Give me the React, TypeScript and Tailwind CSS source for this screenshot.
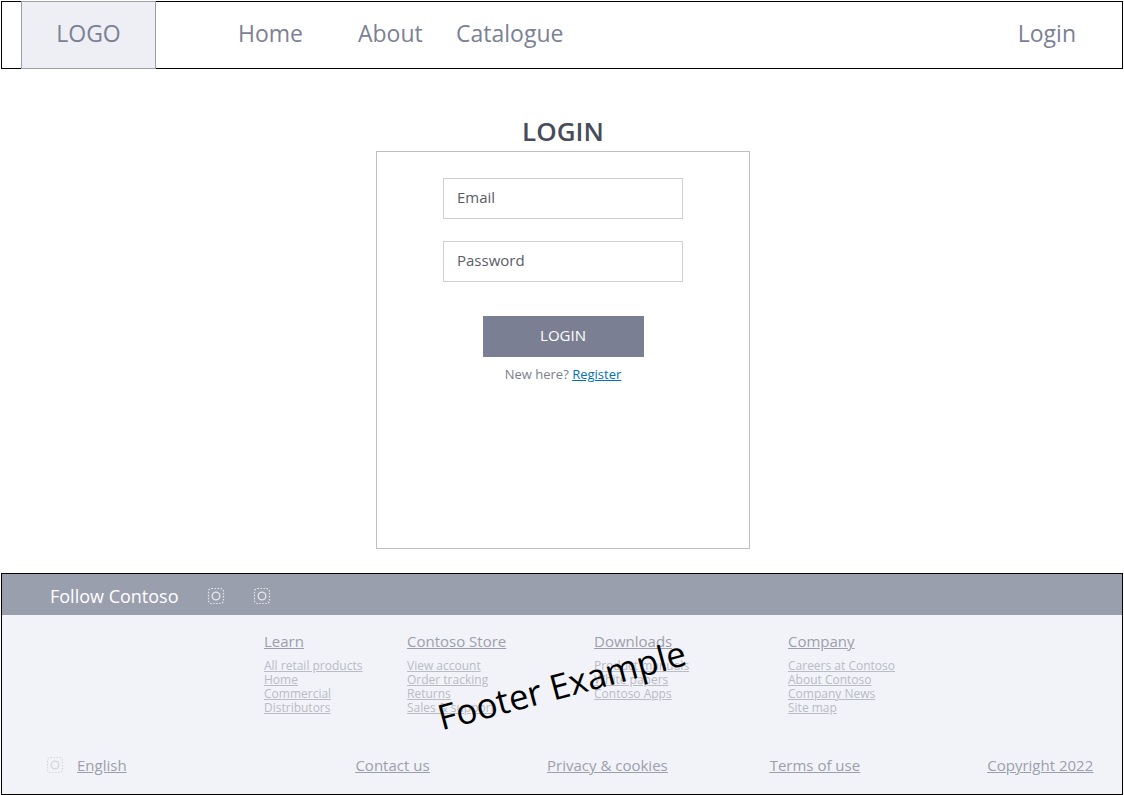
import React from "react";

const columns = [
  { title: "Learn", links: ["All retail products", "Home", "Commercial", "Distributors"] },
  { title: "Contoso Store", links: ["View account", "Order tracking", "Returns", "Sales & support"] },
  { title: "Downloads", links: ["Product manuals", "White papers", "Contoso Apps"] },
  { title: "Company", links: ["Careers at Contoso", "About Contoso", "Company News", "Site map"] },
];

function PlaceholderIcon({ className }: { className: string }) {
  return (
    <svg viewBox="0 0 18 18" className={className} fill="none" stroke="currentColor" aria-hidden="true">
      <rect x="1.5" y="1.5" width="15" height="15" rx="3" strokeWidth="1.2" strokeDasharray="1.5 1.5" />
      <circle cx="9" cy="9" r="3.8" strokeWidth="1.3" />
    </svg>
  );
}

function Header() {
  return (
    <header className="flex h-[68px] items-stretch border border-black pl-5 text-[23px] text-[#7b8194]">
      <a
        href="#"
        className="-my-px -ml-px flex w-[135px] items-center justify-center border border-[#9a9fae] bg-[#eeeff4] pb-[3px]"
      >
        LOGO
      </a>
      <nav className="flex flex-1 items-center pb-[3px] pl-[82px]">
        <a href="#home" className="w-[120px]">Home</a>
        <a href="#about" className="w-[98px]">About</a>
        <a href="#catalogue">Catalogue</a>
        <a href="#login" className="mr-[46px] ml-auto">Login</a>
      </nav>
    </header>
  );
}

function LoginForm() {
  const field =
    "block h-[41px] w-full border border-[#cfcfd5] bg-white px-[13px] pb-[3px] text-[15px] text-[#595d66] outline-none placeholder:text-[#595d66] placeholder:opacity-100";
  return (
    <main className="flex flex-1 flex-col items-center pt-[46px] pb-6 pl-0.5">
      <h1 className="text-[26px] leading-8 font-semibold text-[#474c59]">LOGIN</h1>
      <form
        className="mt-1 flex min-h-[398px] w-[374px] max-w-full flex-1 flex-col items-center border border-[#bfbfc1] px-[66px] pt-[26px]"
        onSubmit={(e) => e.preventDefault()}
      >
        <input id="email" type="email" aria-label="Email" placeholder="Email" className={field} />
        <input
          id="password"
          type="password"
          aria-label="Password"
          placeholder="Password"
          className={`mt-[22px] ${field}`}
        />
        <button type="submit" className="mt-[34px] h-[41px] w-[161px] bg-[#7b7f93] pb-0.5 text-[15px] text-white">
          LOGIN
        </button>
        <p className="mt-[7px] text-[13px] leading-5 text-[#7b7f8c]">
          New here?{" "}
          <a href="#register" className="text-[#0070c0] underline">Register</a>
        </p>
      </form>
    </main>
  );
}

function Footer() {
  return (
    <footer className="border border-black bg-[#f2f3f8] text-[15px] leading-5 text-[#9c9fab]">
      <div className="flex h-[41px] items-center bg-[#9a9fae] pt-0.5 pl-12 text-white">
        <span className="mr-7 text-[18px]">Follow Contoso</span>
        <a href="#social-1" aria-label="First social page" className="mr-7">
          <PlaceholderIcon className="size-[18px] text-[#e6e8ee]" />
        </a>
        <a href="#social-2" aria-label="Second social page">
          <PlaceholderIcon className="size-[18px] text-[#e6e8ee]" />
        </a>
      </div>
      <div className="relative pt-4 pb-10">
        <div className="grid grid-cols-[143fr_187fr_194fr_334fr] pl-[262px]">
          {columns.map((column) => (
            <section key={column.title}>
              <h2>
                <a href="#" className="underline">{column.title}</a>
              </h2>
              <ul className="mt-2 text-[12px] leading-[14px] text-[#b9bbc5]">
                {column.links.map((link) => (
                  <li key={link}>
                    <a href="#" className="underline">{link}</a>
                  </li>
                ))}
              </ul>
            </section>
          ))}
        </div>
        <div className="pointer-events-none absolute inset-0 flex items-center justify-center">
          <p className="-rotate-[15deg] text-[35px] whitespace-nowrap text-black">Footer Example</p>
        </div>
      </div>
      <div className="grid grid-cols-[310fr_192fr_223fr_218fr_135fr] pb-[19px] pl-11 underline">
        <div className="flex items-center gap-[13px]">
          <PlaceholderIcon className="size-[18px] text-[#d3d4dc]" />
          <a href="#language">English</a>
        </div>
        <a href="#contact">Contact us</a>
        <a href="#privacy">Privacy &amp; cookies</a>
        <a href="#terms">Terms of use</a>
        <a href="#copyright">Copyright 2022</a>
      </div>
    </footer>
  );
}

export default function App() {
  return (
    <div className="flex min-h-screen flex-col bg-white px-px pt-px font-['Open_Sans','Noto_Sans',sans-serif]">
      <Header />
      <LoginForm />
      <Footer />
    </div>
  );
}
